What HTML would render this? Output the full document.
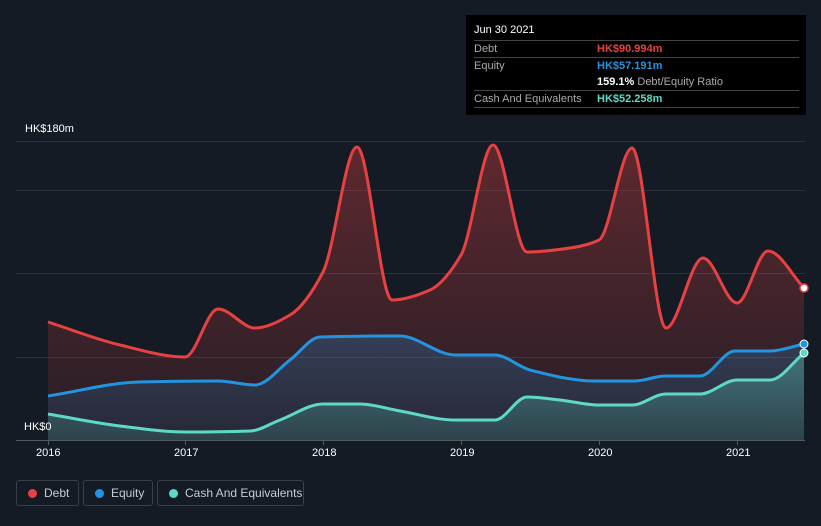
<!DOCTYPE html>
<html><head><style>
body{margin:0;background:#151b24;width:821px;height:526px;overflow:hidden;font-family:"Liberation Sans",sans-serif;position:relative}
.tt{position:absolute;left:466px;top:15px;width:340px;height:100px;background:#000;color:#fff;font-size:11px}
.tt .r{position:absolute;left:8px;width:325px;border-top:1px solid #444;height:17px}
.tt span{position:absolute;top:2px}
.lg{position:absolute;top:480px;height:26px;border:1px solid #3a4049;border-radius:3px;color:#c8ccd2;font-size:12px;box-sizing:border-box;line-height:25px}
.lg i{position:absolute;left:11px;top:8px;width:9px;height:9px;border-radius:50%}
.lg b{font-weight:normal;position:absolute;left:27px}
.ax{position:absolute;color:#fff;font-size:11px}
</style></head><body>
<svg width="821" height="526" style="position:absolute;left:0;top:0">
<defs>
<linearGradient id="gd" x1="0" y1="0" x2="0" y2="1"><stop offset="0" stop-color="#e84142" stop-opacity=".35"/><stop offset="1" stop-color="#e84142" stop-opacity=".08"/></linearGradient>
<linearGradient id="ge" x1="0" y1="0" x2="0" y2="1"><stop offset="0" stop-color="#2394df" stop-opacity=".25"/><stop offset="1" stop-color="#2394df" stop-opacity=".08"/></linearGradient>
<linearGradient id="gc" x1="0" y1="0" x2="0" y2="1"><stop offset="0" stop-color="#5ed9c7" stop-opacity=".35"/><stop offset="1" stop-color="#5ed9c7" stop-opacity=".15"/></linearGradient>
</defs>
<g stroke="#2c323b" stroke-width="1">
<line x1="16" y1="141.5" x2="805" y2="141.5"/><line x1="16" y1="190.5" x2="805" y2="190.5"/><line x1="16" y1="273.5" x2="805" y2="273.5"/><line x1="16" y1="357.5" x2="805" y2="357.5"/>
</g>
<path id="fd" fill="url(#gd)"/><path id="fe" fill="url(#ge)"/><path id="fc" fill="url(#gc)"/>
<path id="ld" fill="none" stroke="#e84142" stroke-width="3"/>
<path id="le" fill="none" stroke="#2394df" stroke-width="3"/>
<path id="lc" fill="none" stroke="#5ed9c7" stroke-width="3"/>
<line x1="16" y1="440.5" x2="805" y2="440.5" stroke="#555b63"/>
<g stroke="#555b63"><line x1="48.5" y1="440" x2="48.5" y2="445"/><line x1="185.5" y1="440" x2="185.5" y2="445"/><line x1="323.5" y1="440" x2="323.5" y2="445"/><line x1="461.5" y1="440" x2="461.5" y2="445"/><line x1="599.5" y1="440" x2="599.5" y2="445"/><line x1="737.5" y1="440" x2="737.5" y2="445"/></g>
<circle cx="804" cy="288" r="4" fill="#fff" stroke="#e84142" stroke-width="1.5"/>
<circle cx="804" cy="344" r="4" fill="#2394df" stroke="#fff" stroke-width="1"/>
<circle cx="804" cy="353" r="4" fill="#5ed9c7" stroke="#fff" stroke-width="1"/>
</svg>
<script>
function mono(p){const n=p.length,s=[],m=[];for(let i=0;i<n-1;i++)s.push((p[i+1][1]-p[i][1])/(p[i+1][0]-p[i][0]));
for(let i=0;i<n;i++){if(i==0)m.push(s[0]);else if(i==n-1)m.push(s[n-2]);else{const a=s[i-1],b=s[i];if(a*b<=0)m.push(0);else{const h0=p[i][0]-p[i-1][0],h1=p[i+1][0]-p[i][0];m.push((a+b)/2*0+ (3*(h0+h1))/((2*h1+h0)/a+(h1+2*h0)/b));}}}
let d="M"+p[0][0]+","+p[0][1];for(let i=0;i<n-1;i++){const h=(p[i+1][0]-p[i][0])/3;d+=" C"+(p[i][0]+h)+","+(p[i][1]+m[i]*h)+" "+(p[i+1][0]-h)+","+(p[i+1][1]-m[i+1]*h)+" "+p[i+1][0]+","+p[i+1][1];}return d;}
const D=[[48,322],[120,345],[185,357],[218,309],[255,328],[290,315],[323,272],[357,147],[392,300],[430,290],[461,255],[493,145],[527,252],[570,248],[599,240],[632,148],[666,328],[703,258],[737,303],[768,251],[804,288]];
const E=[[48,396],[140,382],[218,381],[255,385],[290,360],[320,337],[400,336],[455,355],[495,355],[530,370],[595,381],[635,381],[665,376],[700,376],[735,351],[770,351],[804,344]];
const C=[[48,414],[120,426],[185,432],[250,431],[280,420],[323,404],[360,404],[400,411],[455,420],[495,420],[527,397],[560,400],[599,405],[632,405],[666,394],[700,394],[737,380],[770,380],[804,353]];
[["d",D],["e",E],["c",C]].forEach(([k,p])=>{const s=mono(p);document.getElementById("l"+k).setAttribute("d",s);document.getElementById("f"+k).setAttribute("d",s+" L804,440 L48,440 Z");});
</script>
<div class="ax" style="left:25px;top:123px">HK$180m</div>
<div class="ax" style="left:24px;top:421px">HK$0</div>
<div class="ax" style="left:36px;top:447px">2016</div>
<div class="ax" style="left:174px;top:447px">2017</div>
<div class="ax" style="left:312px;top:447px">2018</div>
<div class="ax" style="left:450px;top:447px">2019</div>
<div class="ax" style="left:588px;top:447px">2020</div>
<div class="ax" style="left:726px;top:447px">2021</div>
<div class="tt">
<span style="left:8px;top:9px">Jun 30 2021</span>
<div class="r" style="top:25px"><span style="left:0;color:#aaa">Debt</span><span style="left:123px;color:#e84142;font-weight:bold">HK$90.994m</span></div>
<div class="r" style="top:42px"><span style="left:0;color:#aaa">Equity</span><span style="left:123px;color:#2394df;font-weight:bold">HK$57.191m</span></div>
<div class="r" style="top:59px;border:0"><span style="left:123px"><b>159.1%</b> <span style="position:static;color:#aaa">Debt/Equity Ratio</span></span></div>
<div class="r" style="top:75px"><span style="left:0;color:#aaa">Cash And Equivalents</span><span style="left:123px;color:#5ed9c7;font-weight:bold">HK$52.258m</span></div>
<div class="r" style="top:92px;height:0"></div>
</div>
<div class="lg" style="left:16px;width:63px"><i style="background:#e84142"></i><b>Debt</b></div>
<div class="lg" style="left:83px;width:70px"><i style="background:#2394df"></i><b>Equity</b></div>
<div class="lg" style="left:157px;width:147px"><i style="background:#5ed9c7"></i><b>Cash And Equivalents</b></div>
</body></html>
